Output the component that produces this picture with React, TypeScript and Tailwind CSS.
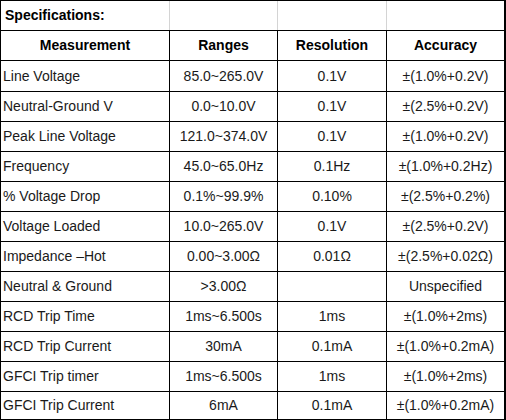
const rows = [
  ["Line Voltage", "85.0~265.0V", "0.1V", "±(1.0%+0.2V)"],
  ["Neutral-Ground V", "0.0~10.0V", "0.1V", "±(2.5%+0.2V)"],
  ["Peak Line Voltage", "121.0~374.0V", "0.1V", "±(1.0%+0.2V)"],
  ["Frequency", "45.0~65.0Hz", "0.1Hz", "±(1.0%+0.2Hz)"],
  ["% Voltage Drop", "0.1%~99.9%", "0.10%", "±(2.5%+0.2%)"],
  ["Voltage Loaded", "10.0~265.0V", "0.1V", "±(2.5%+0.2V)"],
  ["Impedance –Hot", "0.00~3.00Ω", "0.01Ω", "±(2.5%+0.02Ω)"],
  ["Neutral & Ground", ">3.00Ω", "", "Unspecified"],
  ["RCD Trip Time", "1ms~6.500s", "1ms", "±(1.0%+2ms)"],
  ["RCD Trip Current", "30mA", "0.1mA", "±(1.0%+0.2mA)"],
  ["GFCI Trip timer", "1ms~6.500s", "1ms", "±(1.0%+2ms)"],
  ["GFCI Trip Current", "6mA", "0.1mA", "±(1.0%+0.2mA)"],
];

const cols = "grid grid-cols-[169px_108px_109px_119px]";

export default function App() {
  return (
    <div className="w-[506px] h-[420px] bg-white text-[14px] text-[#1a1a1a] font-['Liberation_Sans',Arial,sans-serif]">
      <div className="border-l border-t border-black">
        {/* title row, inner lines are light */}
        <div className={`${cols} h-[30px] border-b border-black`}>
          <div className="flex items-center pl-1 font-bold text-black border-r border-[#d4d4d4]">
            Specifications:
          </div>
          <div className="border-r border-[#d4d4d4]" />
          <div className="border-r border-[#d4d4d4]" />
          <div className="border-r-2 border-black" />
        </div>

        <div className={`${cols} h-[30px] border-b border-black font-bold text-black`}>
          <div className="flex items-center justify-center border-r border-black">Measurement</div>
          <div className="flex items-center justify-center border-r border-black">Ranges</div>
          <div className="flex items-center justify-center border-r border-black">Resolution</div>
          <div className="flex items-center justify-center border-r-2 border-black">Accuracy</div>
        </div>

        {rows.map((r, i) => (
          <div
            key={i}
            className={`${cols} border-b border-black ${
              i === 0 ? "h-[31px]" : i === rows.length - 1 ? "h-[28px]" : "h-[30px]"
            }`}
          >
            <div className="flex items-center pl-[2px] border-r border-black">{r[0]}</div>
            <div className="flex items-center justify-center border-r border-black">{r[1]}</div>
            <div className="flex items-center justify-center border-r border-black">{r[2]}</div>
            <div className="flex items-center justify-center border-r-2 border-black">{r[3]}</div>
          </div>
        ))}
      </div>
    </div>
  );
}
